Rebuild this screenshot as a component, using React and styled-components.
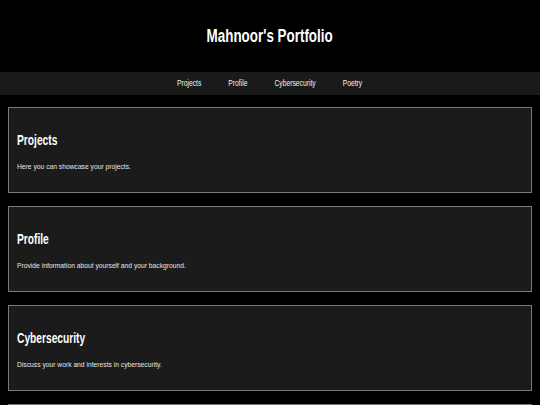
import React from "react";
import styled, { createGlobalStyle } from "styled-components";

// the reference uses a condensed sans; Liberation Sans is squeezed to match its widths
const GlobalStyle = createGlobalStyle`
  body {
    margin: 0;
    background-color: #000;
    color: #fff;
    font-family: "Liberation Sans", Arial, sans-serif;
  }
`;

const Header = styled.header`
  height: 72px;
  display: flex;
  align-items: center;
  justify-content: center;
  background-color: #000;
`;

const Title = styled.h1`
  margin: 0;
  font-size: 18px;
  line-height: 22px;
  font-weight: bold;
  transform: scaleX(0.745);
`;

const Nav = styled.nav`
  height: 23px;
  display: flex;
  align-items: center;
  justify-content: center;
  background-color: #1a1a1a;
`;

const NavRow = styled.div`
  display: flex;
  gap: 36px;
  transform: scaleX(0.75);
`;

const NavLink = styled.a`
  color: #f2f2f2;
  font-size: 9px;
  line-height: 11px;
  text-decoration: none;
`;

const Main = styled.main`
  padding: 12px 8px;
  display: flex;
  flex-direction: column;
  gap: 13px;
`;

const Section = styled.section`
  height: 86px;
  box-sizing: border-box;
  padding: 24px 8px 20px;
  background-color: #1b1b1b;
  border: 1px solid #7a7a7a;
`;

const Heading = styled.h2`
  margin: 0 0 14px;
  font-size: 14px;
  line-height: 16px;
  font-weight: bold;
  transform: scaleX(0.73);
  transform-origin: left center;
`;

const Text = styled.p`
  margin: 0;
  font-size: 8px;
  line-height: 10px;
  color: #e6e6e6;
  transform: scaleX(0.84);
  transform-origin: left center;
`;

const sections = [
  { id: "projects", title: "Projects", text: "Here you can showcase your projects." },
  { id: "profile", title: "Profile", text: "Provide information about yourself and your background." },
  { id: "cybersecurity", title: "Cybersecurity", text: "Discuss your work and interests in cybersecurity." },
  { id: "poetry", title: "Poetry", text: "Share your poems and creative writing." },
];

const App = () => {
  return (
    <>
      <GlobalStyle />
      <Header>
        <Title>Mahnoor's Portfolio</Title>
      </Header>
      <Nav>
        <NavRow>
          {sections.map(s => (
            <NavLink key={s.id} href={`#${s.id}`}>{s.title}</NavLink>
          ))}
        </NavRow>
      </Nav>
      <Main>
        {sections.map(s => (
          <Section key={s.id} id={s.id}>
            <Heading>{s.title}</Heading>
            <Text>{s.text}</Text>
          </Section>
        ))}
      </Main>
    </>
  );
};

export default App;
